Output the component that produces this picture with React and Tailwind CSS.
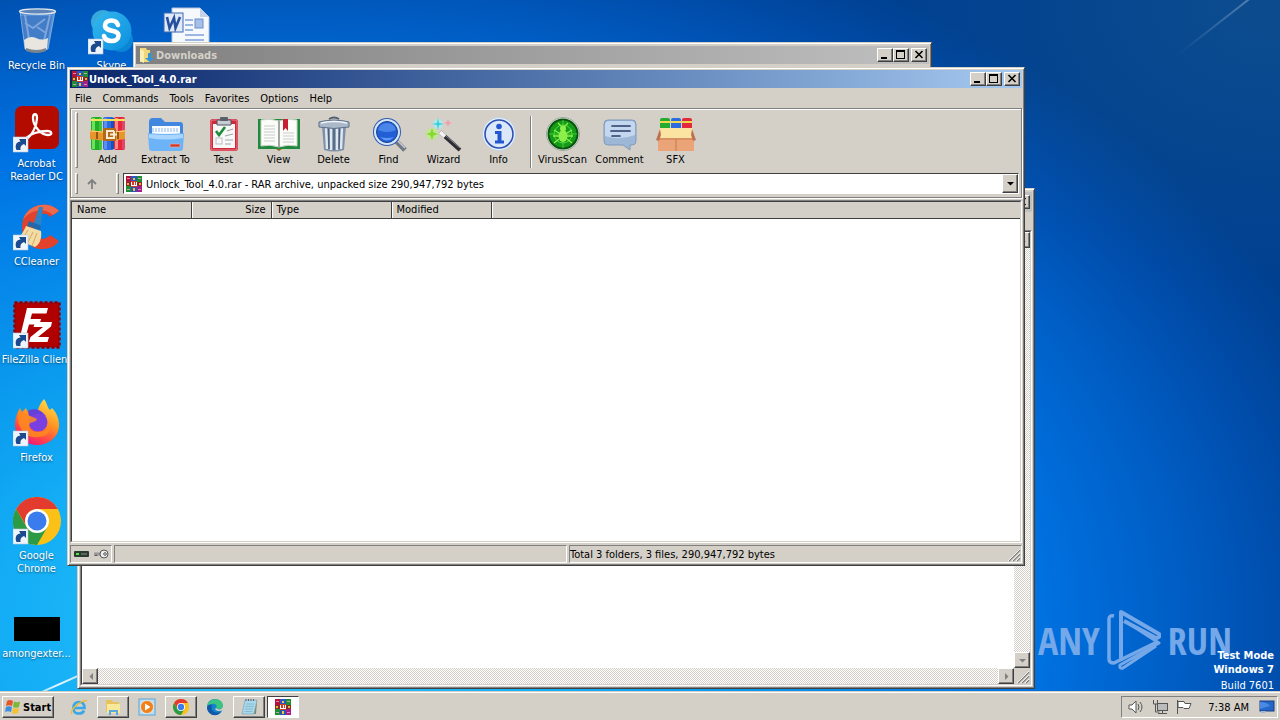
import { useState } from "react";

const raised = "bg-[#d4d0c8] border border-t-white border-l-white border-r-[#404040] border-b-[#404040] shadow-[inset_-1px_-1px_0_#808080]";
const frame = "bg-[#d4d0c8] border border-t-[#d4d0c8] border-l-[#d4d0c8] border-r-[#404040] border-b-[#404040] shadow-[inset_1px_1px_0_#fff,inset_-1px_-1px_0_#808080] p-[2px]";
const sunken = "border border-t-[#808080] border-l-[#808080] border-r-white border-b-white";
const well = "border border-t-[#404040] border-l-[#404040] border-r-[#d4d0c8] border-b-[#d4d0c8] bg-white";
const dither = "bg-[repeating-conic-gradient(#fff_0_25%,#d4d0c8_0_50%)] bg-[length:2px_2px]";

/* ---------- Desktop icons ---------- */

function Shortcut() {
    return (
        <g>
            <rect x="0" y="32" width="15" height="15" fill="#eef4fb" stroke="#b9c8da" strokeWidth="0.6" />
            <path d="M3.500 45c-2-5 0-8 4-8.500L6 34h7v7l-2-2c-3 1-4 3-3.500 6z" fill="#1b4a8f" />
        </g>
    );
}

function RecycleIcon() {
    return (
        <svg viewBox="0 0 48 48" className="size-12">
            <path d="M7 4L12 42q12 6 23 0L42 4z" fill="#8fb4e4" fillOpacity="0.6" stroke="#a9c3e4" strokeOpacity="0.7" />
            <path d="M8 9l4 28q11 5 22 0l5-28z" fill="#2d66b8" fillOpacity="0.45" />
            <path d="M12 8l4 24M37 8l-6 26M12 16l8 5 12-9M24 20l9 6" stroke="#b6d0f2" strokeOpacity="0.5" strokeWidth="2" fill="none" />
            <path d="M11 33q6-5 12-2t12 0l-1 11q-11 5-22 0z" fill="#e9e6df" />
            <path d="M13 41q11 4 20 0v3q-10 4-20 0z" fill="#7c8490" />
            <ellipse cx="24.500" cy="4.500" rx="18" ry="2.600" fill="#5f86b8" stroke="#e3e8ee" strokeWidth="1.400" />
        </svg>
    );
}

function SkypeIcon() {
    return (
        <svg viewBox="0 0 48 48" className="size-12">
            <defs>
                <linearGradient id="sky" x1="0" y1="0" x2="1" y2="1">
                    <stop offset="0" stopColor="#35b9ee" />
                    <stop offset="1" stopColor="#0a8ede" />
                </linearGradient>
            </defs>
            <circle cx="15" cy="15" r="12" fill="#36a9dd" />
            <circle cx="33" cy="33" r="12" fill="#0a86d6" />
            <circle cx="24" cy="24" r="19.500" fill="url(#sky)" />
            <path d="M30 18c-1-3-3.500-4.500-6.500-4.500-4 0-6.500 2-6.500 5 0 7 13.500 3.500 13.500 10 0 3.500-3 5.500-7 5.500-4 0-6.500-1.500-7.500-5" fill="none" stroke="#fff" strokeWidth="4.600" strokeLinecap="round" />
            <Shortcut />
        </svg>
    );
}

function WordIcon() {
    return (
        <svg viewBox="0 0 48 48" className="size-12">
            <path d="M9 1h28l9 9v37H9z" fill="#f5f8fd" stroke="#b6c3d8" />
            <path d="M37 1v9h9z" fill="#c3d2ea" />
            <path d="M22 13h8M22 18h8M22 23h8M22 28h19M22 33h19M14 38h27" stroke="#7da0d8" strokeWidth="1.400" />
            <rect x="32" y="12" width="8" height="9" fill="#a5bfe8" stroke="#6b8fc8" />
            <rect x="1" y="6" width="19" height="19" fill="#dfe9f8" stroke="#3f68b0" />
            <path d="M4 10l2.500 11L11 11l1.500 10L17 10" fill="none" stroke="#274f9e" strokeWidth="2.600" />
        </svg>
    );
}

function AcrobatIcon() {
    return (
        <svg viewBox="0 0 48 48" className="size-12">
            <rect x="2" y="1" width="44" height="43" rx="7" fill="#b30b00" />
            <path d="M12 35C19 31 24 21 24 13c0-5-4-5-4 0 0 8 8 17 15 17 5 0 4-4-1-4-8 0-17 3-21 7-3 3-2 4-1 2z" fill="none" stroke="#fff" strokeWidth="2.300" strokeLinejoin="round" />
            <Shortcut />
        </svg>
    );
}

function CCleanerIcon() {
    return (
        <svg viewBox="0 0 48 48" className="size-12">
            <path d="M46 8C36-3 14 1 10 17c-4 15 5 29 19 29 7 0 13-2 17-8l-9-6c-4 5-11 5-14 0-5-8-1-20 6-21 4-1 6 0 8 3z" fill="#e2422c" />
            <path d="M46 8C36-3 14 1 10 17c7-11 22-13 30-5z" fill="#ee6a4d" />
            <path d="M26 4l4 0-2 18-7-2z" fill="#2d83c6" />
            <path d="M16 18l12 5-1 4-13-4z" fill="#2767a5" />
            <path d="M13 23l15 5c1 7-1 13-6 16L2 36c5-2 8-6 11-13z" fill="#f3dba3" />
            <path d="M15 27l-7 11M20 29l-6 12M24 30l-5 13" stroke="#d2ab62" strokeWidth="1" />
            <Shortcut />
        </svg>
    );
}

function FileZillaIcon() {
    return (
        <svg viewBox="0 0 48 48" className="size-12">
            <rect x="1.500" y="1.500" width="45" height="45" fill="#b00000" stroke="#8c0008" strokeWidth="2.500" strokeDasharray="3 2" />
            <path d="M14 7h21l-1.500 5.500H19l-1.500 5.500H28l-1.500 5.500H16L12 38H6.500z" fill="#fff" />
            <path d="M22 21h17l-1 4.500L25 36h11l-1.500 5H16l1.500-5L30 26h-9.500z" fill="#fff" />
            <Shortcut />
        </svg>
    );
}

function FirefoxIcon() {
    return (
        <svg viewBox="0 0 48 48" className="size-12">
            <defs>
                <linearGradient id="ffx" x1="0.800" y1="0" x2="0.300" y2="1">
                    <stop offset="0" stopColor="#ffe14a" />
                    <stop offset="0.450" stopColor="#ff9322" />
                    <stop offset="0.800" stopColor="#ff3b4f" />
                    <stop offset="1" stopColor="#e31587" />
                </linearGradient>
            </defs>
            <path d="M31 0c4 6 3 8 6 11l2-2c5 5 7 11 7 17 0 12-10 20-22 20S2 37 2 26c0-7 2-12 5-17l2 4 4-4c1 3 2 4 4 4 5-1 7 1 8-2 1-4 3-8 6-11z" fill="url(#ffx)" />
            <circle cx="25" cy="23" r="9.500" fill="#7a3fe0" />
            <path d="M16 18c6-3 10-5 17-1-6-8-14-8-18-5z" fill="#6440d8" />
            <path d="M5 12c7 4 12 4 19 8-1 3-4 3-7 4-3 6 3 9 8 9 8 0 12-5 10-11 4 7 1 16-9 16C13 40 3 30 5 12z" fill="#ff8a1e" fillOpacity="0.850" />
            <Shortcut />
        </svg>
    );
}

function ChromeMark({ size }) {
    return (
        <svg viewBox="0 0 48 48" className={size}>
            <circle cx="24" cy="24" r="24" fill="#fbc116" />
            <path d="M24 12h20.800A24 24 0 0 0 3.200 12L14 30z" fill="#e33b2e" />
            <path d="M3.200 12A24 24 0 0 0 24 48l10.400-18L24 24l-10.400 6z" fill="#2d9a46" />
            <circle cx="24" cy="24" r="12" fill="#fff" />
            <circle cx="24" cy="24" r="9.500" fill="#3a7bee" />
            {size === "size-12" && <Shortcut />}
        </svg>
    );
}

/* ---------- WinRAR icons ---------- */

function RarIcon() {
    return (
        <svg viewBox="0 0 16 16" className="size-4 shrink-0" shapeRendering="crispEdges">
            <rect width="5" height="7" fill="#b3123c" />
            <rect x="5" width="6" height="7" fill="#2759c4" />
            <rect x="11" width="5" height="7" fill="#1d8f33" />
            <rect y="9" width="5" height="7" fill="#1d8f33" />
            <rect x="11" y="9" width="5" height="7" fill="#a3208a" />
            <rect x="5" y="9" width="6" height="7" fill="#2a52b8" />
            <path d="M1 2h3M12 2h3M1 13h3M12 13h3" stroke="#f3b9c4" strokeOpacity="0.700" />
            <path d="M0 6h16v4H0z" fill="#8a2a26" />
            <path d="M1 7h2v2H1zM13 7h2v2h-2z" fill="#e8b33c" />
            <rect x="5" y="5" width="6" height="6" fill="#d33b24" />
            <path d="M5.500 6v3.500h5V6M8 6v3" fill="none" stroke="#fff" />
            <path d="M7 2h2v2H7zM7 12h2v3H7z" fill="#f0c23c" />
        </svg>
    );
}

function Book({ x, light, mid, dark, top }) {
    return (
        <g>
            <rect x={x} y="1" width="11" height="33" rx="2" fill={mid} />
            <rect x={x + 1} y="2" width="3" height="31" fill={light} />
            <rect x={x + 8} y="2" width="3" height="31" fill={dark} />
            <rect x={x} y="3" width="11" height="2" fill={top} />
        </g>
    );
}

function AddIcon() {
    return (
        <svg viewBox="0 0 36 36" className="size-9">
            <Book x={1} light="#6be35c" mid="#22b02a" dark="#3fc43a" top="#f3e25a" />
            <Book x={13} light="#5a90f0" mid="#2d6ce0" dark="#1c4fb8" top="#f3e25a" />
            <Book x={24} light="#ff8a8a" mid="#e6263a" dark="#e0486a" top="#f3e25a" />
            <path d="M0 14q18 3 35 0v9q-17 3-35 0z" fill="#e8962c" />
            <path d="M0 15q18 3 35 0" fill="none" stroke="#ffd27a" />
            <path d="M7 16v7M28 16v7" stroke="#7a4310" strokeWidth="1.500" />
            <rect x="13" y="12" width="13" height="13" rx="1" fill="#b36a18" />
            <path d="M24 15h-7v7h7v-7M20 18.500h7" fill="none" stroke="#f7ead0" strokeWidth="2" />
        </svg>
    );
}

function ExtractIcon() {
    return (
        <svg viewBox="0 0 36 36" className="size-9">
            <path d="M1 6q0-4 4-4h8l4 4h15q3 0 3 3v20H1z" fill="#4186df" />
            <path d="M4 10h28v12H4z" fill="#f7fbff" />
            <path d="M5 12v4M8 12v4M11 12v4M14 12v4M17 12v4M20 12v4M23 12v4M26 12v4M29 12v4" stroke="#8fb7ec" />
            <path d="M0 17q18 2 36 0l-1 15q0 3-3 3H4q-3 0-3-3z" fill="#6cb3f7" />
            <path d="M1 18q17 2 34 0v4q-17 3-34 0z" fill="#a9d5ff" />
            <rect x="22" y="28" width="10" height="3" rx="1" fill="#d23a2c" stroke="#f4b4a8" strokeWidth="0.600" />
        </svg>
    );
}

function TestIcon() {
    return (
        <svg viewBox="0 0 36 36" className="size-9">
            <rect x="4" y="3" width="28" height="32" rx="3" fill="#cf2a3c" />
            <rect x="5" y="4" width="26" height="30" rx="2" fill="none" stroke="#f07b85" />
            <path d="M7 8h22v24H7z" fill="#f8f8f6" />
            <path d="M11 4h14v5H11z" fill="#c9ccd2" stroke="#4f545e" />
            <rect x="14" y="1" width="8" height="4" rx="1" fill="#5a5f69" />
            <path d="M10 15l3 4 6-8" fill="none" stroke="#1c8c3c" strokeWidth="2.600" />
            <rect x="10" y="22" width="6" height="6" fill="none" stroke="#b9bdc4" />
            <path d="M21 15l6-2M19 20l8-2M19 24h8M19 28h6" stroke="#a0a5ad" strokeWidth="1.200" />
        </svg>
    );
}

function ViewIcon() {
    return (
        <svg viewBox="0 0 44 36" className="h-9 w-11">
            <path d="M1 3h42v30H1z" fill="#1f8a3e" />
            <path d="M4 4q9-2 18 1v26q-9-3-18-1z" fill="#fbfbf8" stroke="#cdd3ca" />
            <path d="M40 4q-9-2-18 1v26q9-3 18-1z" fill="#fbfbf8" stroke="#cdd3ca" />
            <path d="M22 5v26" stroke="#8b958d" strokeWidth="1.500" />
            <path d="M7 10h11M7 13h11M7 16h11M7 19h11M7 22h11M7 25h11M26 17h11M26 20h11M26 23h11M26 26h11" stroke="#c9cdd0" />
            <path d="M26 3h5v12l-2.500-3-2.500 3z" fill="#c91f34" />
            <path d="M19 33h6l-3 2z" fill="#9a6a22" />
        </svg>
    );
}

function DeleteIcon() {
    return (
        <svg viewBox="0 0 36 36" className="size-9">
            <path d="M6 10h24l-2 24q-10 3-20 0z" fill="#7d90a8" />
            <path d="M10 11l1 22M15 11v23M21 11v23M26 11l-1 22" stroke="#dfe8f2" strokeWidth="2.400" />
            <path d="M12.500 12l.5 21M18 12v22M23.500 12l-.5 21" stroke="#4c5f7a" strokeWidth="1.400" />
            <path d="M3 6q15-4 30 0v5q-15 3-30 0z" fill="#a9b9ca" stroke="#5c6e86" />
            <path d="M5 7q13-3 26 0" fill="none" stroke="#f2f6fa" strokeWidth="1.500" />
            <path d="M13 3q5-3 10 0" fill="none" stroke="#4c5b70" strokeWidth="1.800" />
        </svg>
    );
}

function FindIcon() {
    return (
        <svg viewBox="0 0 36 36" className="size-9">
            <path d="M24 24l10 10" stroke="#6f7784" strokeWidth="5" />
            <path d="M25 23l9 9" stroke="#c9ced6" strokeWidth="1.500" />
            <circle cx="16" cy="16" r="14" fill="#2c5cae" />
            <circle cx="16" cy="16" r="13" fill="#d5e6fa" />
            <circle cx="16" cy="16" r="10.500" fill="#225fd6" stroke="#173f93" />
            <path d="M7 14q2-7 9-7t9 7q-9 4-18 0z" fill="#4a86ea" />
            <path d="M9 21q7 7 14 0-7 2-14 0z" fill="#5c98f4" />
        </svg>
    );
}

function WizardIcon() {
    return (
        <svg viewBox="0 0 36 36" className="size-9">
            <circle cx="6" cy="18" r="6" fill="#b9ef7c" fillOpacity="0.700" />
            <circle cx="12" cy="8" r="5" fill="#a4f0f0" fillOpacity="0.700" />
            <path d="M6 12l1.500 4.500L12 18l-4.500 1.500L6 24l-1.500-4.500L0 18l4.500-1.500z" fill="#86d92e" />
            <path d="M12 2l1 5 5 1-5 1-1 5-1-5-5-1 5-1z" fill="#35cde0" />
            <path d="M22 3l1 3 3 1-3 1-1 3-1-3-3-1 3-1z" fill="#f59aa8" />
            <path d="M14 16l20 18" stroke="#2d2d33" strokeWidth="4" />
            <path d="M14 16l5 4.500" stroke="#f2f2f2" strokeWidth="4" />
            <path d="M20 20l14 12" stroke="#8a8a92" strokeWidth="1" />
        </svg>
    );
}

function InfoIcon() {
    return (
        <svg viewBox="0 0 36 36" className="size-9">
            <circle cx="18" cy="18" r="16.500" fill="#e9f1fb" stroke="#c3d2e6" />
            <circle cx="18" cy="18" r="14" fill="#dbe8fa" stroke="#2b50b4" strokeWidth="1.600" />
            <circle cx="18" cy="10.500" r="2.800" fill="#2257d0" />
            <path d="M14 15h6.500v9.500h2.500v3h-9v-3h2.500v-6.500H14z" fill="#2257d0" />
        </svg>
    );
}

function VirusIcon() {
    return (
        <svg viewBox="0 0 36 36" className="size-9">
            <circle cx="18" cy="18" r="16.500" fill="#eaf2ea" stroke="#9aa89a" />
            <circle cx="18" cy="18" r="14.500" fill="#169a1a" stroke="#0b5410" strokeWidth="2" />
            <circle cx="18" cy="18" r="9" fill="none" stroke="#4fdc3c" />
            <path d="M18 4v28M4 18h28" stroke="#4fdc3c" strokeWidth="0.800" />
            <ellipse cx="18" cy="20" rx="4.500" ry="6" fill="#8df04a" />
            <circle cx="18" cy="12.500" r="3" fill="#8df04a" />
            <path d="M14 17l-5-3M14 20H8M14 23l-5 4M22 17l5-3M22 20h6M22 23l5 4M16 10l-3-3M20 10l3-3" stroke="#8df04a" strokeWidth="1.300" />
        </svg>
    );
}

function CommentIcon() {
    return (
        <svg viewBox="0 0 36 36" className="size-9">
            <path d="M6 4h24q4 0 4 4v17q0 4-4 4h-2v5l-7-5H6q-4 0-4-4V8q0-4 4-4z" fill="#9db7d6" stroke="#7e99bd" />
            <path d="M7 5h22q4 0 4 4v10Q18 25 3 20V9q0-4 4-4z" fill="#c3d7ee" />
            <path d="M10 10h18M9 15h19M10 20h8" stroke="#2a3d66" strokeWidth="1.700" strokeLinecap="round" />
        </svg>
    );
}

function SfxIcon() {
    return (
        <svg viewBox="0 0 40 36" className="h-9 w-10">
            <rect x="4" y="2" width="10" height="14" rx="2" fill="#25ab2f" />
            <rect x="15" y="2" width="10" height="14" rx="2" fill="#2d6ce0" />
            <rect x="26" y="2" width="10" height="14" rx="2" fill="#e32a3c" />
            <path d="M4 6h10M15 6h10M26 6h10" stroke="#f0d84c" strokeWidth="2" />
            <path d="M2 16h36v19H2z" fill="#eaa477" />
            <path d="M4 12h32l3 10H1z" fill="#fbe3a2" />
            <path d="M4 13L0 24l3 1 2-6zM36 13l4 11-3 1-2-6z" fill="#b87252" />
            <path d="M20 23v12" stroke="#c9794e" />
            <path d="M2 23h36" stroke="#c97c50" />
        </svg>
    );
}

/* ---------- Shared window parts ---------- */

function CaptionButtons() {
    return (
        <div className="flex shrink-0 pr-0.5">
            <button aria-label="Minimize" className={`h-[14px] w-4 ${raised}`}>
                <svg viewBox="0 0 14 12" className="h-3 w-3.5"><path d="M3 8h6v2H3z" /></svg>
            </button>
            <button aria-label="Maximize" className={`h-[14px] w-4 ${raised}`}>
                <svg viewBox="0 0 14 12" className="h-3 w-3.5"><path fillRule="evenodd" d="M2 1h9v9H2zM3 3h7v6H3z" /></svg>
            </button>
            <button aria-label="Close" className={`ml-0.5 h-[14px] w-4 ${raised}`}>
                <svg viewBox="0 0 14 12" className="h-3 w-3.5"><path d="M3.500 2l7 7M10.500 2l-7 7" stroke="#000" strokeWidth="1.600" /></svg>
            </button>
        </div>
    );
}

function Arrow({ dir }) {
    const paths = { left: "M7 1v7L3.500 4.500z", right: "M3 1v7l3.500-3.500z", down: "M1 3h7L4.500 6.500z", up: "M1 6h7L4.500 2.500z" };
    return <svg viewBox="0 0 9 9" className="mx-auto size-[9px]"><path d={paths[dir]} fill="currentColor" /></svg>;
}

function Grip() {
    return (
        <svg viewBox="0 0 14 14" className="size-3.5 self-end">
            <path d="M2 13L13 2M6 13l7-7M10 13l3-3" stroke="#808080" strokeWidth="1.500" />
            <path d="M1 13L13 1M5 13l8-8M9 13l4-4" stroke="#fff" strokeWidth="0.800" />
        </svg>
    );
}

function DownloadsWindow() {
    return (
        <section className={`absolute top-[42px] right-[348px] left-[133px] h-[120px] ${frame}`}>
            <div className="mt-px flex h-[18px] items-center bg-linear-to-r from-[#808080] to-[#c0c0c0] pl-0.5">
                <svg viewBox="0 0 16 16" className="mr-0.5 size-4">
                    <path d="M2 1h6l1 2h3v12H2z" fill="#f1d67a" />
                    <path d="M2 2l4 2v12l-4-2z" fill="#fbeeb2" />
                    <path d="M10 6h3v5h3l-4.500 4L7 11h3z" fill="#2f95da" />
                </svg>
                <h2 className="flex-1 font-bold text-[#d4d0c8]">Downloads</h2>
                <CaptionButtons />
            </div>
        </section>
    );
}

function EditorWindow() {
    return (
        <section className={`absolute top-[188px] right-[245px] bottom-0.5 left-[77px] flex flex-col ${frame}`}>
            <div className="mt-px flex h-5 items-center justify-end bg-linear-to-r from-[#808080] to-[#c0c0c0]">
                <CaptionButtons />
            </div>
            <div className="h-[18px]" />
            <div className={`flex min-h-0 flex-1 flex-col ${sunken}`}>
                <div className={`flex min-h-0 flex-1 ${well}`}>
                    <div className="flex flex-1 flex-col">
                        <div className="flex-1" />
                        <div className={`flex h-4 justify-between ${dither}`}>
                            <button aria-label="Scroll left" className={`w-4 text-[#808080] ${raised}`}><Arrow dir="left" /></button>
                            <button aria-label="Scroll right" className={`w-4 text-[#808080] ${raised}`}><Arrow dir="right" /></button>
                        </div>
                    </div>
                    <div className="flex w-4 flex-col">
                        <div className={`flex flex-1 flex-col justify-between ${dither}`}>
                            <button aria-label="Scroll up" className={`h-4 text-[#808080] ${raised}`}><Arrow dir="up" /></button>
                            <button aria-label="Scroll down" className={`h-4 text-[#808080] ${raised}`}><Arrow dir="down" /></button>
                        </div>
                        <div className="flex h-4 justify-end bg-[#d4d0c8]"><Grip /></div>
                    </div>
                </div>
            </div>
        </section>
    );
}

/* ---------- WinRAR ---------- */

const tools = [
    { name: "Add", icon: <AddIcon />, width: "w-[55px]" },
    { name: "Extract To", icon: <ExtractIcon />, width: "w-[61px]" },
    { name: "Test", icon: <TestIcon />, width: "w-[55px]" },
    { name: "View", icon: <ViewIcon />, width: "w-[55px]" },
    { name: "Delete", icon: <DeleteIcon />, width: "w-[55px]" },
    { name: "Find", icon: <FindIcon />, width: "w-[55px]" },
    { name: "Wizard", icon: <WizardIcon />, width: "w-[55px]" },
    { name: "Info", icon: <InfoIcon />, width: "w-[55px]" },
    { name: "VirusScan", icon: <VirusIcon />, width: "w-[57px]", separated: true },
    { name: "Comment", icon: <CommentIcon />, width: "w-[57px]" },
    { name: "SFX", icon: <SfxIcon />, width: "w-[55px]" },
];

function Handle() {
    return <span className="w-[3px] shrink-0 border border-t-white border-r-[#808080] border-b-[#808080] border-l-white" />;
}

function WinRarWindow() {
    const [path, setPath] = useState("archive");

    return (
        <section className={`absolute top-[67px] right-[255px] bottom-[125px] left-[67px] flex flex-col ${frame}`}>
            <div className="flex h-[18px] shrink-0 items-center bg-linear-to-r from-[#0a246a] to-[#a6caf0] pl-0.5">
                <RarIcon />
                <h1 className="ml-px flex-1 font-bold text-white">Unlock_Tool_4.0.rar</h1>
                <CaptionButtons />
            </div>

            <nav className="flex h-5 shrink-0 items-center gap-px">
                {
                    ["File", "Commands", "Tools", "Favorites", "Options", "Help"].map((item) => (
                        <button key={item} className="px-[5px]">{item}</button>
                    ))
                }
            </nav>

            <div className="shrink-0 border border-[#808080] shadow-[inset_1px_1px_0_#fff,1px_1px_0_#fff]">
                <div className="flex h-[62px] py-[3px] pl-1">
                    <Handle />
                    <div className="flex pt-1 pl-0.5">
                        {
                            tools.map((tool) => (
                                <div key={tool.name} className="flex">
                                    {tool.separated && <span className="mr-0.5 ml-1 w-0.5 border-l border-[#808080] bg-white" />}
                                    <button className={`flex flex-col items-center whitespace-nowrap ${tool.width}`}>
                                        {tool.icon}
                                        <span className="mt-px">{tool.name}</span>
                                    </button>
                                </div>
                            ))
                        }
                    </div>
                </div>
                <div className="flex h-[26px] pt-0.5 pr-0.5 pb-[3px] pl-1">
                    <Handle />
                    <button aria-label="Up one level" className="mr-2.5 w-7">
                        <svg viewBox="0 0 12 12" className="mx-auto size-3"><path d="M6 11V2M2 6l4-4 4 4" fill="none" stroke="#808080" strokeWidth="1.800" /></svg>
                    </button>
                    <Handle />
                    <div className="ml-1 flex flex-1 items-center border border-t-[#404040] border-r-white border-b-white border-l-[#404040] bg-white pl-0.5">
                        <RarIcon />
                        <select aria-label="Archive path" value={path} onChange={(e) => setPath(e.target.value)} className="flex-1 appearance-none bg-white pt-0.5 pl-1 outline-none">
                            <option value="archive">Unlock_Tool_4.0.rar - RAR archive, unpacked size 290,947,792 bytes</option>
                        </select>
                        <span className={`flex w-4 items-center self-stretch ${raised}`}><Arrow dir="down" /></span>
                    </div>
                </div>
            </div>

            <div className={`mt-0.5 flex min-h-0 flex-1 flex-col ${sunken}`}>
                <div className={`flex-1 ${well}`}>
                    <table className="w-full table-fixed border-collapse text-left">
                        <thead>
                            <tr className="h-4 border-b border-[#404040] bg-[#d4d0c8]">
                                <th className="w-[119px] border-r border-[#404040] px-[5px] font-normal">Name</th>
                                <th className="w-20 border-r border-[#404040] px-[5px] text-right font-normal shadow-[inset_1px_0_0_#fff]">Size</th>
                                <th className="w-[120px] border-r border-[#404040] px-[5px] font-normal shadow-[inset_1px_0_0_#fff]">Type</th>
                                <th className="w-[100px] border-r border-[#404040] px-[5px] font-normal shadow-[inset_1px_0_0_#fff]">Modified</th>
                                <th className="shadow-[inset_1px_0_0_#fff]" />
                            </tr>
                        </thead>
                        <tbody />
                    </table>
                </div>
            </div>

            <footer className="mt-0.5 flex h-[18px] shrink-0 gap-0.5">
                <div className={`flex w-[42px] items-center gap-1 pl-[3px] ${sunken}`}>
                    <svg viewBox="0 0 15 6" className="h-1.5 w-[15px]">
                        <rect width="15" height="6" rx="1" fill="#2c3a30" />
                        <path d="M2 2h3v2H2z" fill="#4fe84a" />
                        <path d="M7 3h6" stroke="#8b968e" />
                    </svg>
                    <svg viewBox="0 0 16 10" className="h-2.5 w-4" fill="none">
                        <path d="M1 5h7M3 5v2" stroke="#555" strokeWidth="2.600" />
                        <path d="M1 5h7" stroke="#ddd" />
                        <circle cx="11" cy="5" r="4" fill="#eee" stroke="#555" />
                        <circle cx="12" cy="5" r="1.300" stroke="#555" />
                    </svg>
                </div>
                <div className={`flex-1 ${sunken}`} />
                <div className={`flex flex-1 items-center justify-between ${sunken}`}>
                    <span>Total 3 folders, 3 files, 290,947,792 bytes</span>
                    <Grip />
                </div>
            </footer>
        </section>
    );
}

/* ---------- Desktop ---------- */

const shortcuts = [
    { name: "Recycle Bin", icon: <RecycleIcon /> },
    { name: "Acrobat Reader DC", icon: <AcrobatIcon />, wrap: true },
    { name: "CCleaner", icon: <CCleanerIcon /> },
    { name: "FileZilla Client", icon: <FileZillaIcon /> },
    { name: "Firefox", icon: <FirefoxIcon /> },
    { name: "Google Chrome", icon: <ChromeMark size="size-12" />, wrap: true },
    { name: "amongexter...", icon: <span className="flex h-12 items-end pb-0.5"><span className="h-6 w-[46px] bg-black" /></span> },
];

function DesktopIcon({ name, icon, wrap }) {
    return (
        <button className="flex h-[98px] w-[73px] flex-col items-center text-white [text-shadow:0_1px_2px_#00000080]">
            {icon}
            {name && <span className={wrap ? "mt-1 px-1.5" : "mt-1 whitespace-nowrap"}>{name}</span>}
        </button>
    );
}

function Watermark() {
    return (
        <div className="absolute right-12 bottom-4 flex items-center gap-[7px] font-['Open_Sans_Condensed','Liberation_Sans_Narrow','Roboto_Condensed',sans-serif] text-[38px] leading-[70px] font-light text-[#74a8e8]">
            <span>ANY</span>
            <svg viewBox="0 0 54 62" className="h-[62px] w-[54px]" fill="none" stroke="currentColor" strokeWidth="4" strokeLinejoin="round">
                <path d="M7 7Q2 6 2 10v40q0 4 5 4l43-21" strokeWidth="3.500" />
                <path d="M14 52V3l38 22q1 4-3 4L17 12" />
                <path d="M18 12l34 22L13 56q-1 4 3 3l33-22" strokeWidth="3" />
            </svg>
            <span>RUN</span>
        </div>
    );
}

/* ---------- Taskbar ---------- */

function TaskButton({ label, open, active, children }) {
    let look = "";
    if (open) look = raised;
    if (active) look = "bg-white border border-t-[#404040] border-l-[#404040] border-r-white border-b-white";
    return (
        <button aria-label={label} className={`flex w-8 items-center justify-center ${look}`}>
            {children}
        </button>
    );
}

function Taskbar() {
    return (
        <footer className="flex h-[29px] shrink-0 items-stretch border-t border-[#d4d0c8] bg-[#d4d0c8] px-0.5 pt-1 pb-0.5 shadow-[inset_0_1px_0_#fff]">
            <button className={`flex w-[52px] items-center gap-0.5 pl-0.5 font-bold ${raised}`}>
                <svg viewBox="0 0 16 16" className="size-4 shrink-0">
                    <path d="M2 2q3-2 6 0L7 7Q4 5.500 1 7z" fill="#e8542c" />
                    <path d="M9 2.500q3 1.500 6 0L14 8q-3 1.500-6 0z" fill="#7db83a" />
                    <path d="M1 8q3-1.500 6 0l-1 5Q3 11.500 0 13z" fill="#3c8ede" />
                    <path d="M8 9q3 1.500 6 0l-1 5q-3 1.500-6 0z" fill="#f6c12d" />
                </svg>
                Start
            </button>
            <div className="ml-[9px] flex flex-1 gap-0.5">
                <TaskButton label="Internet Explorer">
                    <svg viewBox="0 0 18 18" className="size-[18px]" fill="none">
                        <path d="M4 10h10.500q0-6-5.500-6T3.500 10 9 15.500q4 0 5-3" stroke="#38a8e8" strokeWidth="2.600" />
                        <path d="M2 16C-1 12 12 1 17 3" stroke="#f0bb35" strokeWidth="1.400" />
                    </svg>
                </TaskButton>
                <TaskButton label="Explorer" open>
                    <svg viewBox="0 0 18 18" className="size-[18px]">
                        <path d="M2 2h6l1 2h6v10H2z" fill="#e6c35c" />
                        <path d="M3 6h13v9H3z" fill="#f9e79a" />
                        <path d="M5 17v-5h9v5h-2v-3H7v3z" fill="#5aa9dc" />
                    </svg>
                </TaskButton>
                <TaskButton label="Media Player">
                    <svg viewBox="0 0 18 18" className="size-[18px]">
                        <rect x="1" y="1" width="16" height="16" fill="#b8def5" stroke="#5da4d2" />
                        <circle cx="9" cy="9" r="6.500" fill="#f08018" stroke="#fff" strokeWidth="0.600" />
                        <path d="M7 5.500v7l5.500-3.500z" fill="#fff" />
                    </svg>
                </TaskButton>
                <TaskButton label="Google Chrome" open><ChromeMark size="size-4" /></TaskButton>
                <TaskButton label="Microsoft Edge">
                    <svg viewBox="0 0 18 18" className="size-[18px]">
                        <circle cx="9" cy="9" r="8" fill="#1583cc" />
                        <path d="M1 8C3-1 17-1 17 8c0 3-5 4-7 2 2-3-1-5-4-4-3 0-5 2-5 2z" fill="#3cc57e" />
                        <path d="M6 7c-2 5 2 9 9 7-5 6-13 3-14-4 0-3 3-4 5-3z" fill="#1159a8" />
                        <path d="M10 10c2 2 5 2 7-1v3c-3 2-7 1-8-1z" fill="#d4d0c8" />
                    </svg>
                </TaskButton>
                <TaskButton label="Notepad" open>
                    <svg viewBox="0 0 18 18" className="size-[18px]">
                        <path d="M5 2h12l-3 14H2z" fill="#a8d8ea" stroke="#6b9eb8" strokeWidth="0.600" />
                        <path d="M6 6h8M5.500 8.500h8M5 11h8M4.500 13.500h8" stroke="#6fa8c0" strokeWidth="0.600" />
                        <path d="M6 1v2M8.500 1v2M11 1v2M13.500 1v2" stroke="#667" />
                        <path d="M17 3l-3 13h2z" fill="#7a8c70" />
                    </svg>
                </TaskButton>
                <TaskButton label="WinRAR" active><RarIcon /></TaskButton>
            </div>
            <div className={`flex items-center gap-2 pr-0.5 pl-1.5 ${sunken}`}>
                <svg viewBox="0 0 16 14" className="h-3.5 w-4" fill="none" stroke="#555">
                    <path d="M1 5h3l4-4v12L4 9H1z" fill="#fff" />
                    <path d="M10 4q2 3 0 6M12 2q4 5 0 10" />
                </svg>
                <svg viewBox="0 0 16 16" className="size-4" fill="none" stroke="#555">
                    <rect x="5.500" y="4.500" width="10" height="7" fill="#bbb" />
                    <path d="M10.500 12v2M6 14.500h9M1.500 1v4h4V1M3.500 5v8h4" />
                </svg>
                <svg viewBox="0 0 16 14" className="h-3.5 w-4" fill="#fff" stroke="#555">
                    <path d="M1.500 0v14M2 1.500h6l1 2h6l-2 5H8l-1-1H2z" />
                </svg>
                <time className="ml-2 whitespace-nowrap">7:38 AM</time>
                <svg viewBox="0 0 16 14" className="ml-0.5 h-3.5 w-4">
                    <rect x="1" y="1" width="14" height="10" fill="#2467c8" stroke="#183f82" />
                    <path d="M1 2q7 0 10 4L1 9z" fill="#4a8ae4" />
                    <path d="M2 11h5l-1 2H2z" fill="#9db9de" />
                </svg>
            </div>
        </footer>
    );
}

export default function App() {
    return (
        <div className="flex h-screen flex-col overflow-hidden font-['DejaVu_Sans_Condensed','Noto_Sans',sans-serif] text-[11px] leading-[13px] text-black select-none">
            <main className="relative min-h-0 flex-1 overflow-hidden bg-[radial-gradient(30%_40%_at_100%_0%,#2a6a8a4d_0%,transparent_100%),radial-gradient(86%_108%_at_23%_90%,#2cc4fa_0%,#14aef6_26%,#0a9aee_40%,#0074e4_66%,#0060c8_79%,#004dab_90%,#004090_100%)]">
                <span className="absolute bottom-1.5 -left-1 h-0.5 w-32 origin-bottom -rotate-24 bg-linear-to-r from-transparent via-white/90 to-white/30" />
                <span className="absolute top-6 right-4 h-0.5 w-24 -rotate-38 bg-linear-to-r from-transparent to-white/30" />
                <div className="flex h-full items-start gap-0.5 pt-[7px]">
                    <div>
                        {shortcuts.map((item) => <DesktopIcon key={item.name} {...item} />)}
                    </div>
                    <DesktopIcon name="Skype" icon={<SkypeIcon />} />
                    <DesktopIcon icon={<WordIcon />} />
                </div>

                <Watermark />
                <div className="absolute right-1.5 -bottom-px text-right text-white">
                    <p className="pb-px font-bold">Test Mode</p>
                    <p className="font-bold">Windows 7</p>
                    <p className="pt-[3px]">Build 7601</p>
                </div>

                <EditorWindow />
                <DownloadsWindow />
                <WinRarWindow />
            </main>
            <Taskbar />
        </div>
    );
}
